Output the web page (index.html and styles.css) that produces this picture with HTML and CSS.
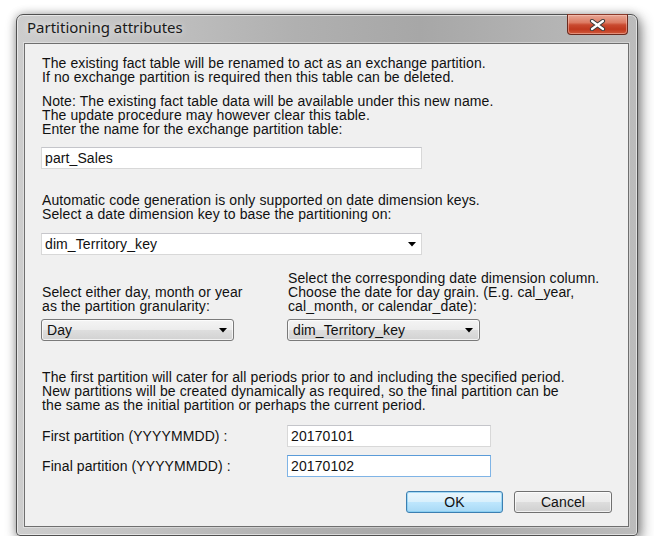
FILE: index.html
```html
<!DOCTYPE html>
<html>
<head>
<meta charset="utf-8">
<title>Partitioning attributes</title>
<link rel="stylesheet" href="styles.css">
</head>
<body>
<div class="window">
  <div class="titlebar">
    <span class="title">Partitioning attributes</span>
    <div class="close">
      <svg width="17" height="12" viewBox="0 0 17 12">
        <path d="M3 2 L14 10 M14 2 L3 10" stroke="#3a3a3a" stroke-width="4.2" stroke-linecap="round"/>
        <path d="M3 2 L14 10 M14 2 L3 10" stroke="#ffffff" stroke-width="2.2" stroke-linecap="round"/>
      </svg>
    </div>
  </div>
  <div class="client">
    <p class="para p1">The existing fact table will be renamed to act as an exchange partition.<br>If no exchange partition is required then this table can be deleted.</p>
    <p class="para p2">Note: The existing fact table data will be available under this new name.<br>The update procedure may however clear this table.<br>Enter the name for the exchange partition table:</p>
    <div class="textbox wide tb-name">part_Sales</div>
    <p class="para p3">Automatic code generation is only supported on date dimension keys.<br>Select a date dimension key to base the partitioning on:</p>
    <div class="combo-edit wide">
      <span>dim_Territory_key</span>
      <svg class="arrow" width="8" height="5" viewBox="0 0 8 5"><path d="M0 0 H8 L4 4.5 Z" fill="#000"/></svg>
    </div>
    <div class="cols">
      <div class="col col-left">
        <p class="para">Select either day, month or year<br>as the partition granularity:</p>
        <div class="combo-list">
          <span>Day</span>
          <svg class="arrow" width="8" height="5" viewBox="0 0 8 5"><path d="M0 0 H8 L4 4.5 Z" fill="#000"/></svg>
        </div>
      </div>
      <div class="col col-right">
        <p class="para">Select the corresponding date dimension column.<br>Choose the date for day grain. (E.g. cal_year,<br>cal_month, or calendar_date):</p>
        <div class="combo-list">
          <span>dim_Territory_key</span>
          <svg class="arrow" width="8" height="5" viewBox="0 0 8 5"><path d="M0 0 H8 L4 4.5 Z" fill="#000"/></svg>
        </div>
      </div>
    </div>
    <p class="para p4">The first partition will cater for all periods prior to and including the specified period.<br>New partitions will be created dynamically as required, so the final partition can be<br>the same as the initial partition or perhaps the current period.</p>
    <div class="field-row first-row">
      <span class="field-label">First partition (YYYYMMDD) :</span>
      <div class="textbox date">20170101</div>
    </div>
    <div class="field-row second-row">
      <span class="field-label">Final partition (YYYYMMDD) :</span>
      <div class="textbox date focused">20170102</div>
    </div>
    <div class="buttons">
      <div class="btn btn-ok">OK</div>
      <div class="btn">Cancel</div>
    </div>
  </div>
</div>
</body>
</html>
```

FILE: styles.css
```css
html, body {
  margin: 0;
  padding: 0;
  background: #ffffff;
}

body {
  padding: 14px 0 0 16px;
  font-family: "Liberation Sans", Arial, sans-serif;
  font-size: 14px;
  letter-spacing: 0.1px;
  color: #111111;
}

.window {
  width: 605px;
  border: 1px solid #505050;
  border-radius: 7px 7px 4px 4px;
  padding: 0 8px 8px 7px;
  background: linear-gradient(90deg, #cdcdcd 0%, #c2c2c2 20%, #b0b0b0 45%, #a7a7a7 65%, #b3b3b3 85%, #bcbcbc 100%);
  box-shadow: inset 0 0 0 1px rgba(255, 255, 255, 0.55), 3px 5px 14px rgba(0, 0, 0, 0.45), 0 0 8px rgba(0, 0, 0, 0.25);
}

.titlebar {
  height: 28px;
  display: flex;
  justify-content: space-between;
  align-items: flex-start;
}

.title {
  font-family: "Noto Sans", "Open Sans", sans-serif;
  font-size: 15px;
  letter-spacing: 0;
  color: #1a1a1a;
  padding: 2px 0 0 3px;
  line-height: 20px;
  text-shadow: 0 0 6px rgba(255, 255, 255, 0.8);
}

.close {
  width: 59px;
  height: 19px;
  margin-top: -1px;
  margin-right: 1px;
  border: 1px solid #6a2a1e;
  border-top-color: #8a3a2a;
  border-radius: 0 0 4px 4px;
  background: linear-gradient(180deg, #e7a796 0%, #dc7a62 40%, #c94a30 52%, #c0381e 75%, #d05a3c 100%);
  box-shadow: inset 0 0 0 1px rgba(255, 210, 200, 0.45);
  display: flex;
  align-items: center;
  justify-content: center;
}

.client {
  border: 1px solid #6f6f6f;
  background: #f0f0f0;
  padding: 12px 16px 13px 16px;
  box-shadow: 0 0 0 1px rgba(255, 255, 255, 0.35);
}

.para {
  margin: 0;
  padding-left: 1px;
  line-height: 14px;
  white-space: nowrap;
}

.p2 { margin-top: 10px; }
.p3 { margin-top: 24px; }
.p4 { margin-top: 29px; }

.textbox {
  box-sizing: border-box;
  height: 22px;
  line-height: 20px;
  background: #ffffff;
  border: 1px solid #d8d8d8;
  border-top-color: #c4c5ca;
  padding-left: 3px;
}

.wide { width: 381px; }

.tb-name { margin-top: 11px; }

.combo-edit {
  box-sizing: border-box;
  margin-top: 12px;
  height: 22px;
  background: #ffffff;
  border: 1px solid #d8d8d8;
  border-top-color: #c6c6cb;
  padding: 0 5px 0 3px;
  display: flex;
  align-items: center;
  justify-content: space-between;
}

.cols {
  margin-top: 16px;
  display: flex;
  align-items: flex-end;
}

.col {
  display: flex;
  flex-direction: column;
}

.col-left { width: 246px; }

.combo-list {
  box-sizing: border-box;
  margin-top: 6px;
  width: 193px;
  height: 22px;
  border: 1px solid #7a7a7a;
  border-radius: 3px;
  background: linear-gradient(180deg, #f4f4f4 0%, #ececec 48%, #dedede 52%, #d2d2d2 100%);
  box-shadow: inset 0 0 0 1px rgba(255, 255, 255, 0.7);
  padding: 0 6px 0 5px;
  display: flex;
  align-items: center;
  justify-content: space-between;
}

.arrow { flex: none; }

.field-row {
  display: flex;
  align-items: center;
}

.first-row { margin-top: 13px; }
.second-row { margin-top: 8px; }

.field-label {
  width: 245px;
  padding-left: 1px;
  white-space: nowrap;
}

.date { width: 204px; }

.focused {
  border: 1px solid #7fb4e6;
  border-top-color: #5a9bd8;
}

.buttons {
  margin-top: 14px;
  display: flex;
  justify-content: flex-end;
  gap: 11px;
}

.btn {
  box-sizing: border-box;
  width: 98px;
  height: 22px;
  border: 1px solid #707070;
  border-radius: 3px;
  background: linear-gradient(180deg, #f2f2f2 0%, #ebebeb 48%, #dddddd 52%, #cfcfcf 100%);
  box-shadow: inset 0 0 0 1px rgba(255, 255, 255, 0.7);
  text-align: center;
  line-height: 20px;
}

.btn-ok {
  width: 97px;
  border-color: #3c7fb1;
  background: linear-gradient(180deg, #eaf6fd 0%, #d9f0fc 48%, #bee6fd 52%, #a7d9f5 100%);
  box-shadow: inset 0 0 0 1px rgba(120, 200, 240, 0.6);
}
```
